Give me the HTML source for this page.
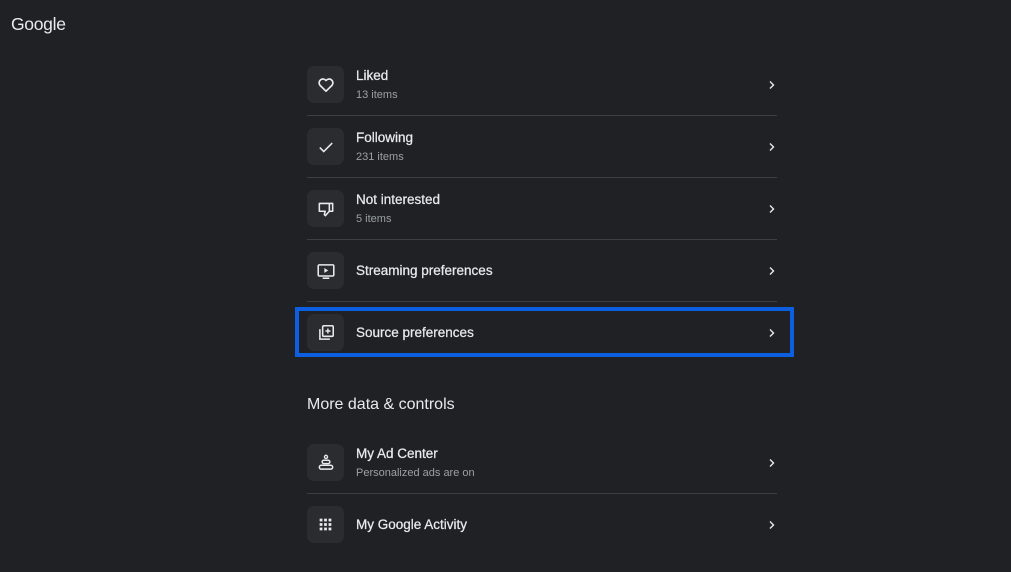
<!DOCTYPE html>
<html><head><meta charset="utf-8"><style>
body{margin:0;width:1011px;height:572px;background:#202124;font-family:"Liberation Sans",Arial,sans-serif;color:#e8eaed;position:relative;overflow:hidden}
.logo{position:absolute;left:11px;top:14px;font-size:17.5px;color:#e8eaed;letter-spacing:-0.3px}
.row{position:absolute;left:307px;width:470px;height:62px}
.ic{position:absolute;left:0;width:37px;height:37px;border-radius:7px;background:#2b2c2f;display:flex;align-items:center;justify-content:center}
.t{position:absolute;left:49px;font-size:13.5px;color:#e8eaed;-webkit-text-stroke:0.25px #e8eaed}
.s{position:absolute;left:49px;font-size:11px;color:#9aa0a6}
.ch{position:absolute;right:0;width:10px;height:10px}
.div{position:absolute;left:307px;width:470px;height:1px;background:#3c4043}
.h{position:absolute;left:307px;top:396px;font-size:16px;color:#e8eaed}
.hl{position:absolute;left:295px;top:307px;width:491px;height:42px;border:4px solid #0b5fe0}
</style></head><body>
<div class="logo">Google</div>

<svg width="0" height="0" style="position:absolute"><defs><symbol id="chev" viewBox="0 0 10 10"><path d="M3 1.5 L6.5 5 L3 8.5" fill="none" stroke="#e8eaed" stroke-width="1.4"/></symbol></defs></svg>

<div class="row" style="top:54px">
<div class="ic" style="top:12px"><svg width="18" height="18" viewBox="0 0 16 16"><path d="M8 13.5 L2.6 8.2 A3.1 3.1 0 0 1 8 4 A3.1 3.1 0 0 1 13.4 8.2 Z" fill="none" stroke="#e8eaed" stroke-width="1.5" stroke-linejoin="round"/></svg></div>
<div class="t" style="top:14px">Liked</div><div class="s" style="top:35px">13 items</div>
<svg class="ch" style="top:26px"><use href="#chev"/></svg></div>
<div class="div" style="top:115px"></div>

<div class="row" style="top:116px">
<div class="ic" style="top:12px"><svg width="18" height="18" viewBox="0 0 16 16"><path d="M2.5 8.5 L6 12 L13.5 4.5" fill="none" stroke="#e8eaed" stroke-width="1.4"/></svg></div>
<div class="t" style="top:14px">Following</div><div class="s" style="top:35px">231 items</div>
<svg class="ch" style="top:26px"><use href="#chev"/></svg></div>
<div class="div" style="top:177px"></div>

<div class="row" style="top:178px">
<div class="ic" style="top:12px"><svg width="20" height="20" viewBox="0 0 18 18"><path d="M3 4 H12 V11 L8.5 15 L7.5 14 L8.3 11 H3 Z M12 4 H15 V11 H12" fill="none" stroke="#e8eaed" stroke-width="1.4" stroke-linejoin="round"/></svg></div>
<div class="t" style="top:14px">Not interested</div><div class="s" style="top:35px">5 items</div>
<svg class="ch" style="top:26px"><use href="#chev"/></svg></div>
<div class="div" style="top:239px"></div>

<div class="row" style="top:240px">
<div class="ic" style="top:12px"><svg width="20" height="20" viewBox="0 0 18 18"><rect x="2" y="3.5" width="14" height="10" rx="1" fill="none" stroke="#e8eaed" stroke-width="1.4"/><path d="M7.5 6.3 V10.7 L11 8.5 Z" fill="#e8eaed"/><path d="M6 15.5 H12" stroke="#e8eaed" stroke-width="1.4"/></svg></div>
<div class="t" style="top:23px">Streaming preferences</div>
<svg class="ch" style="top:26px"><use href="#chev"/></svg></div>
<div class="div" style="top:301px"></div>

<div class="row" style="top:302px">
<div class="ic" style="top:12px"><svg width="20" height="20" viewBox="0 0 18 18"><rect x="6" y="2.5" width="9.5" height="9.5" rx="1" fill="none" stroke="#e8eaed" stroke-width="1.4"/><path d="M3.5 5.5 V14.5 H12.5" fill="none" stroke="#e8eaed" stroke-width="1.4"/><path d="M10.7 5 V9.5 M8.5 7.2 H13" stroke="#e8eaed" stroke-width="1.3"/></svg></div>
<div class="t" style="top:23px">Source preferences</div>
<svg class="ch" style="top:26px"><use href="#chev"/></svg></div>
<div class="hl"></div>

<div class="h">More data &amp; controls</div>

<div class="row" style="top:432px">
<div class="ic" style="top:12px"><svg width="20" height="20" viewBox="0 0 18 18"><circle cx="9" cy="3.5" r="1.4" fill="none" stroke="#e8eaed" stroke-width="1.2"/><rect x="5.5" y="6.5" width="7" height="3" rx="1.5" fill="none" stroke="#e8eaed" stroke-width="1.3"/><rect x="3" y="11" width="12" height="3.5" rx="1.7" fill="none" stroke="#e8eaed" stroke-width="1.3"/></svg></div>
<div class="t" style="top:14px">My Ad Center</div><div class="s" style="top:35px">Personalized ads are on</div>
<svg class="ch" style="top:26px"><use href="#chev"/></svg></div>
<div class="div" style="top:493px"></div>

<div class="row" style="top:494px">
<div class="ic" style="top:12px"><svg width="17" height="17" viewBox="0 0 16 16" fill="#e8eaed"><rect x="2.5" y="2.5" width="2.6" height="2.6"/><rect x="6.7" y="2.5" width="2.6" height="2.6"/><rect x="10.9" y="2.5" width="2.6" height="2.6"/><rect x="2.5" y="6.7" width="2.6" height="2.6"/><rect x="6.7" y="6.7" width="2.6" height="2.6"/><rect x="10.9" y="6.7" width="2.6" height="2.6"/><rect x="2.5" y="10.9" width="2.6" height="2.6"/><rect x="6.7" y="10.9" width="2.6" height="2.6"/><rect x="10.9" y="10.9" width="2.6" height="2.6"/></svg></div>
<div class="t" style="top:23px">My Google Activity</div>
<svg class="ch" style="top:26px"><use href="#chev"/></svg></div>
</body></html>
